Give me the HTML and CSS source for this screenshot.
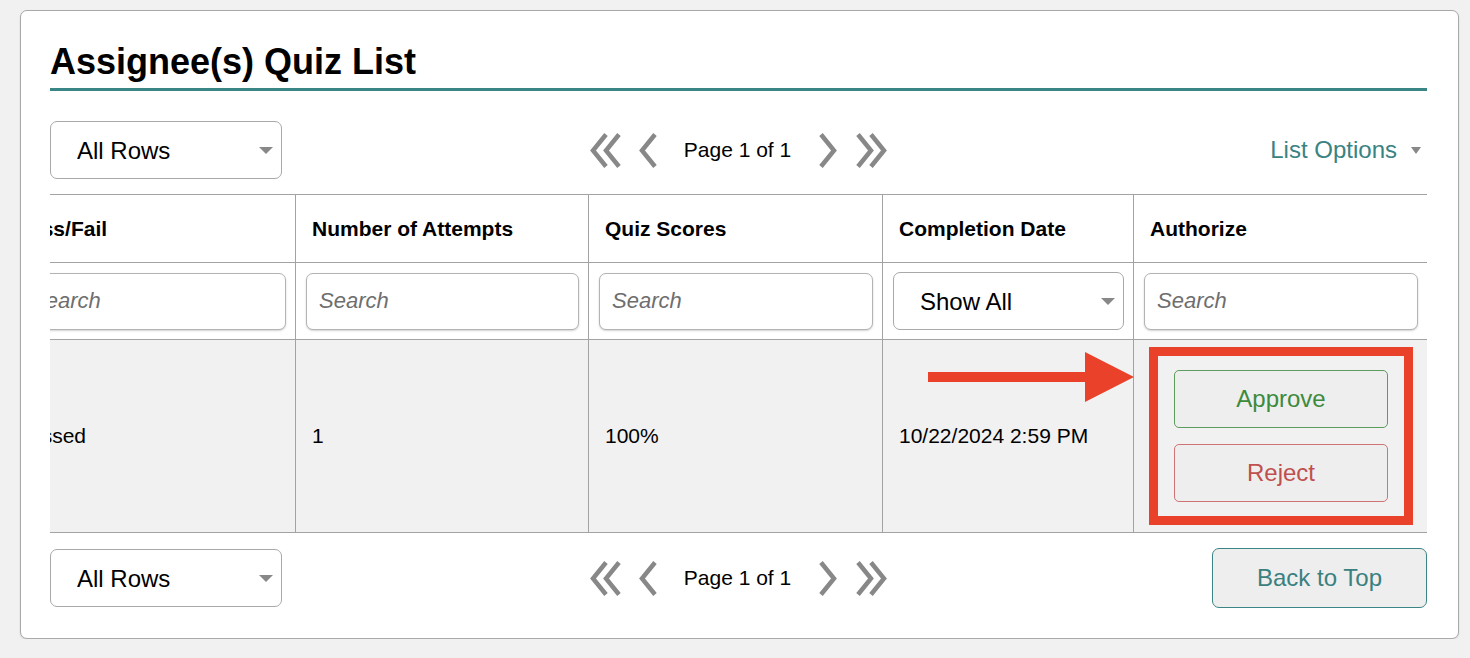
FILE: index.html
```html
<!DOCTYPE html>
<html lang="en">
<head>
    <meta charset="UTF-8">
    <meta name="viewport" content="width=device-width, initial-scale=1.0">
    <title>Assignee(s) Quiz List</title>
    <link rel="stylesheet" href="styles.css">
</head>
<body>
    <div class="panel">
        <h1 class="panel-title">Assignee(s) Quiz List</h1>

        <!-- Barra superior: linhas, paginação, opções -->
        <div class="list-bar list-bar-top">
            <div class="select-wrap rows-select">
                <select><option>All Rows</option></select>
                <span class="caret"></span>
            </div>
            <nav class="pager">
                <svg class="chev chev-double" viewBox="0 0 31 35"><path d="M16 1.5 L3 17.5 L16 33.5 M29 1.5 L16 17.5 L29 33.5"/></svg>
                <svg class="chev chev-single chev-prev" viewBox="0 0 18 35"><path d="M16 1.5 L3 17.5 L16 33.5"/></svg>
                <span class="pager-label">Page 1 of 1</span>
                <svg class="chev chev-single chev-next" viewBox="0 0 18 35"><path d="M2 1.5 L15 17.5 L2 33.5"/></svg>
                <svg class="chev chev-double" viewBox="0 0 31 35"><path d="M2 1.5 L15 17.5 L2 33.5 M15 1.5 L28 17.5 L15 33.5"/></svg>
            </nav>
            <a class="list-options" href="#">List Options <span class="caret caret-small"></span></a>
        </div>

        <!-- Tabela de questionários -->
        <div class="table-scroll">
            <table class="quiz-table">
                <colgroup>
                    <col style="width: 296px">
                    <col style="width: 293px">
                    <col style="width: 294px">
                    <col style="width: 251px">
                    <col style="width: 294px">
                </colgroup>
                <thead>
                    <tr class="head-row">
                        <th>Pass/Fail</th>
                        <th>Number of Attempts</th>
                        <th>Quiz Scores</th>
                        <th>Completion Date</th>
                        <th>Authorize</th>
                    </tr>
                    <tr class="filter-row">
                        <td><input type="text" placeholder="Search"></td>
                        <td><input type="text" placeholder="Search"></td>
                        <td><input type="text" placeholder="Search"></td>
                        <td>
                            <div class="select-wrap">
                                <select><option>Show All</option></select>
                                <span class="caret"></span>
                            </div>
                        </td>
                        <td><input type="text" placeholder="Search"></td>
                    </tr>
                </thead>
                <tbody>
                    <tr class="data-row">
                        <td>Passed</td>
                        <td>1</td>
                        <td>100%</td>
                        <td class="date-cell">
                            10/22/2024 2:59 PM
                            <svg class="pointer-arrow" viewBox="0 0 206 50"><path d="M0 20 H157 V0 L206 25 L157 50 V30 H0 Z"/></svg>
                        </td>
                        <td class="authorize-cell">
                            <div class="authorize-box">
                                <button class="btn-approve">Approve</button>
                                <button class="btn-reject">Reject</button>
                            </div>
                        </td>
                    </tr>
                </tbody>
            </table>
        </div>

        <!-- Barra inferior -->
        <div class="list-bar list-bar-bottom">
            <div class="select-wrap rows-select">
                <select><option>All Rows</option></select>
                <span class="caret"></span>
            </div>
            <nav class="pager">
                <svg class="chev chev-double" viewBox="0 0 31 35"><path d="M16 1.5 L3 17.5 L16 33.5 M29 1.5 L16 17.5 L29 33.5"/></svg>
                <svg class="chev chev-single chev-prev" viewBox="0 0 18 35"><path d="M16 1.5 L3 17.5 L16 33.5"/></svg>
                <span class="pager-label">Page 1 of 1</span>
                <svg class="chev chev-single chev-next" viewBox="0 0 18 35"><path d="M2 1.5 L15 17.5 L2 33.5"/></svg>
                <svg class="chev chev-double" viewBox="0 0 31 35"><path d="M2 1.5 L15 17.5 L2 33.5 M15 1.5 L28 17.5 L15 33.5"/></svg>
            </nav>
            <button class="back-top">Back to Top</button>
        </div>
    </div>
</body>
</html>
```

FILE: styles.css
```css
/* Estilos globais */
body {
    margin: 0;
    padding: 10px 11px 0 20px;
    background-color: #f1f1f1;
    font-family: "Liberation Sans", Arial, sans-serif;
    color: #000;
}

.panel {
    background-color: #fff;
    border: 1px solid #a9a9a9;
    border-radius: 7px;
    box-shadow: 0 1px 2px rgba(0, 0, 0, 0.12);
    padding: 30px 31px 30px 29px;
}

.panel-title {
    margin: 0;
    font-size: 36px;
    line-height: 42px;
    font-weight: bold;
    padding-bottom: 5px;
    border-bottom: 3px solid #3a8585;
}

/* Barras de controle */
.list-bar {
    display: grid;
    grid-template-columns: 1fr auto 1fr;
    align-items: center;
}

.list-bar-top {
    margin-top: 30px;
    margin-bottom: 15px;
}

.list-bar-bottom {
    margin-top: 15px;
}

.select-wrap {
    position: relative;
}

.select-wrap select {
    appearance: none;
    -webkit-appearance: none;
    display: block;
    width: 100%;
    height: 58px;
    padding: 0 30px 0 26px;
    border: 1px solid #a9a9a9;
    border-radius: 7px;
    background-color: #fff;
    font-family: inherit;
    font-size: 24px;
    color: #000;
}

.rows-select {
    width: 232px;
}

.caret {
    position: absolute;
    right: 9px;
    top: 50%;
    margin-top: -3px;
    width: 0;
    height: 0;
    border-left: 7px solid transparent;
    border-right: 7px solid transparent;
    border-top: 7px solid #888;
}

/* Paginação */
.pager {
    display: flex;
    align-items: center;
}

.chev {
    height: 35px;
    fill: none;
    stroke: #888;
    stroke-width: 4.5;
}

.chev-double {
    width: 31px;
}

.chev-single {
    width: 18px;
}

.chev-prev {
    margin-left: 18px;
}

.chev-next {
    margin-right: 19px;
}

.pager-label {
    font-size: 21px;
    margin: 0 28px 0 27px;
}

.list-options {
    justify-self: end;
    display: flex;
    align-items: center;
    padding-right: 6px;
    font-size: 24px;
    color: #398383;
    text-decoration: none;
}

.list-options .caret-small {
    position: static;
    margin: 0 0 0 14px;
    border-left-width: 5px;
    border-right-width: 5px;
}

.back-top {
    justify-self: end;
    width: 215px;
    height: 60px;
    border: 1px solid #3a8585;
    border-radius: 7px;
    background-color: #eeeeee;
    color: #3a8080;
    font-family: inherit;
    font-size: 24px;
}

/* Tabela (rolada horizontalmente, primeira coluna parcialmente oculta) */
.table-scroll {
    overflow: hidden;
}

.quiz-table {
    margin-left: -51px;
    table-layout: fixed;
    width: 1428px;
    border-collapse: collapse;
}

.quiz-table th,
.quiz-table td {
    border: 1px solid #a3a3a3;
    text-align: left;
    font-size: 21px;
}

.head-row th {
    height: 67px;
    padding: 0 16px;
    font-weight: bold;
}

.filter-row td {
    height: 76px;
    padding: 0 9px 0 10px;
}

.filter-row td:first-child {
    padding-left: 18px;
}

.filter-row input {
    display: block;
    box-sizing: border-box;
    width: 100%;
    height: 57px;
    padding: 0 12px;
    border: 1px solid #b3b3b3;
    border-radius: 7px;
    box-shadow: 0 1px 2px rgba(0, 0, 0, 0.18);
    font-family: inherit;
    font-size: 22px;
    font-style: italic;
}

.filter-row input::placeholder {
    color: #6e6e6e;
}

.filter-row .select-wrap select {
    height: 58px;
}

.data-row td {
    height: 192px;
    padding: 0 16px;
    background-color: #f1f1f1;
}

.date-cell {
    position: relative;
}

.pointer-arrow {
    position: absolute;
    left: 45px;
    top: 12px;
    width: 206px;
    height: 50px;
    fill: #e9412a;
}

.data-row .authorize-cell {
    height: 178px;
    padding: 7px 14px 7px 15px;
}

.authorize-box {
    display: flex;
    flex-direction: column;
    gap: 16px;
    padding: 14px 16px 14px;
    border: 9px solid #e9412a;
}

.authorize-box button {
    height: 58px;
    border-radius: 5px;
    background-color: #eeeeee;
    font-family: inherit;
    font-size: 24px;
}

.btn-approve {
    border: 1px solid #5c9c5c;
    color: #3d8a3d;
}

.btn-reject {
    border: 1px solid #cf7474;
    color: #c0504d;
}
```
